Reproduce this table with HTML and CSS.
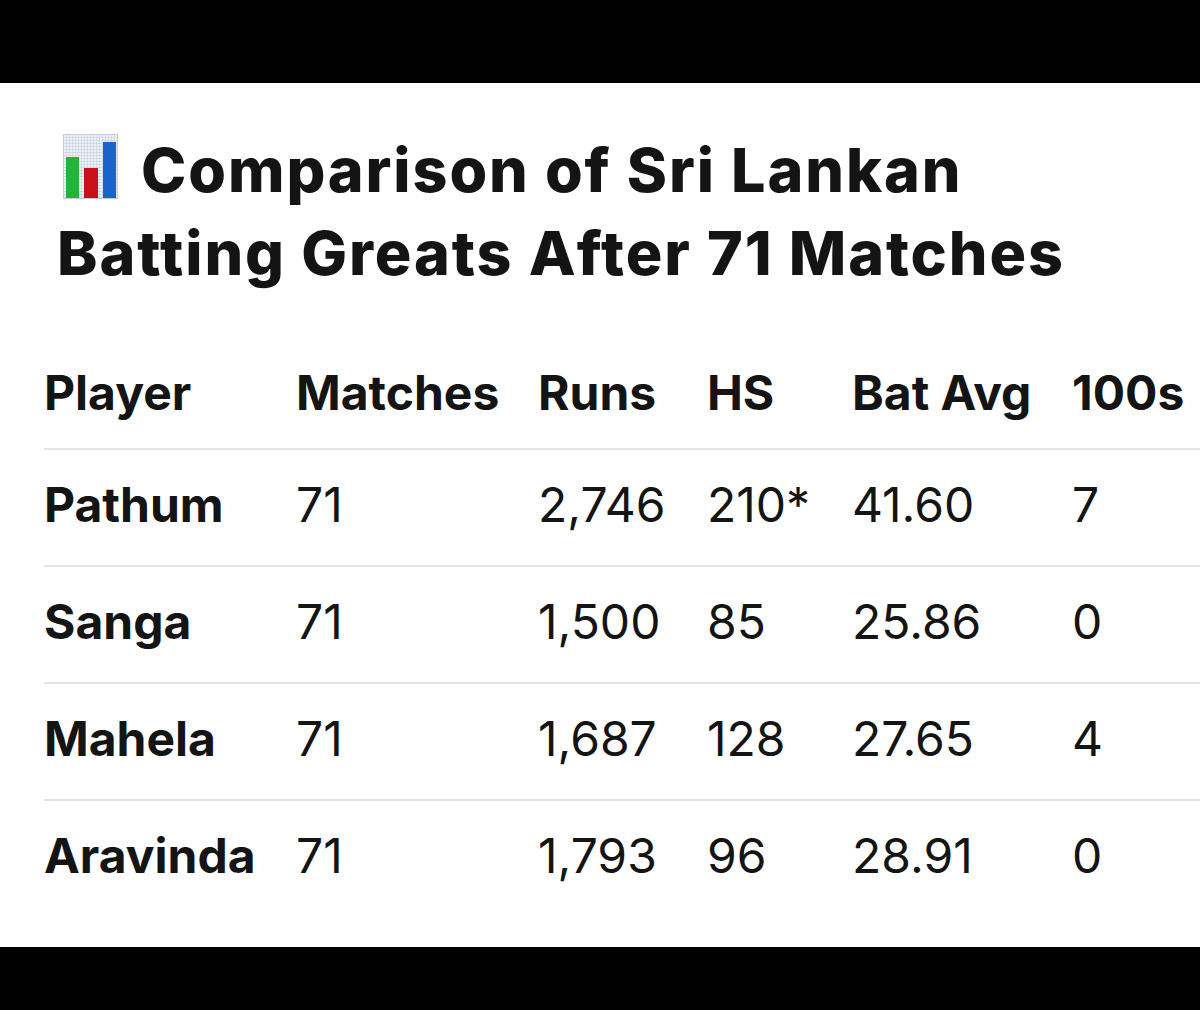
FILE: index.html
```html
<!DOCTYPE html>
<html lang="en">
<head>
<meta charset="utf-8">
<title>Comparison of Sri Lankan Batting Greats</title>
<link rel="stylesheet" href="styles.css">
</head>
<body>
<main class="page">
  <h1 class="title"><svg class="emoji" viewBox="0 0 55 65" aria-hidden="true">
      <defs>
        <pattern id="grid" width="3" height="3" patternUnits="userSpaceOnUse">
          <rect width="3" height="3" fill="#eef1f6"/>
          <path d="M0 0.5H3M0.5 0V3" stroke="#c9d2e0" stroke-width="0.7"/>
        </pattern>
      </defs>
      <rect x="0.5" y="0.5" width="54" height="64" fill="url(#grid)" stroke="#c4ccd8"/>
      <rect x="3" y="23" width="13" height="41" fill="#22b53a"/>
      <rect x="21" y="34" width="14" height="30" fill="#c8101a"/>
      <rect x="40" y="8" width="13" height="56" fill="#1a62cc"/>
    </svg>Comparison of Sri Lankan<br>Batting Greats After 71 Matches</h1>

  <table class="stats">
    <thead>
      <tr>
        <th class="c1">Player</th>
        <th class="c2">Matches</th>
        <th class="c3">Runs</th>
        <th class="c4">HS</th>
        <th class="c5">Bat Avg</th>
        <th class="c6">100s</th>
      </tr>
    </thead>
    <tbody>
      <tr><td class="name">Pathum</td><td>71</td><td>2,746</td><td>210*</td><td>41.60</td><td>7</td></tr>
      <tr><td class="name">Sanga</td><td>71</td><td>1,500</td><td>85</td><td>25.86</td><td>0</td></tr>
      <tr><td class="name">Mahela</td><td>71</td><td>1,687</td><td>128</td><td>27.65</td><td>4</td></tr>
      <tr><td class="name">Aravinda</td><td>71</td><td>1,793</td><td>96</td><td>28.91</td><td>0</td></tr>
    </tbody>
  </table>
</main>
</body>
</html>
```

FILE: styles.css
```css
html, body {
  margin: 0;
  padding: 0;
  background: #000;
  height: 1010px;
  overflow: hidden;
}

.page {
  margin-top: 83px;
  height: 864px;
  background: #fff;
  overflow: hidden;
  padding-left: 44px;
  box-sizing: border-box;
  font-family: Inter, "Noto Sans", "Liberation Sans", sans-serif;
  color: #141414;
}

.title {
  margin: 46px 0 0 13px;
  font-size: 61px;
  line-height: 83px;
  font-weight: 800;
  letter-spacing: 1.9px;
  white-space: nowrap;
}

.emoji {
  display: inline-block;
  width: 55px;
  height: 65px;
  margin-left: 6px;
  margin-right: 23px;
  vertical-align: -7px;
}

.stats {
  margin-top: 41px;
  border-collapse: collapse;
  table-layout: fixed;
  width: 1164px;
  font-size: 48px;
  line-height: 72px;
}

.stats th,
.stats td {
  box-sizing: border-box;
  text-align: left;
  padding: 19px 24px 24px 24px;
  white-space: nowrap;
  border-bottom: 2px solid #e4e4e4;
}

.stats th {
  font-weight: 700;
  padding-top: 21px;
  padding-bottom: 19px;
}

.stats tbody tr:last-child td {
  border-bottom: none;
}

.stats td {
  font-weight: 400;
}

.stats td.name {
  font-weight: 700;
}

.stats th:first-child,
.stats td:first-child {
  padding-left: 0;
}

.c1 { width: 228px; }
.c2 { width: 242px; }
.c3 { width: 169px; }
.c4 { width: 145px; }
.c5 { width: 220px; }
.c6 { width: 160px; }
```
